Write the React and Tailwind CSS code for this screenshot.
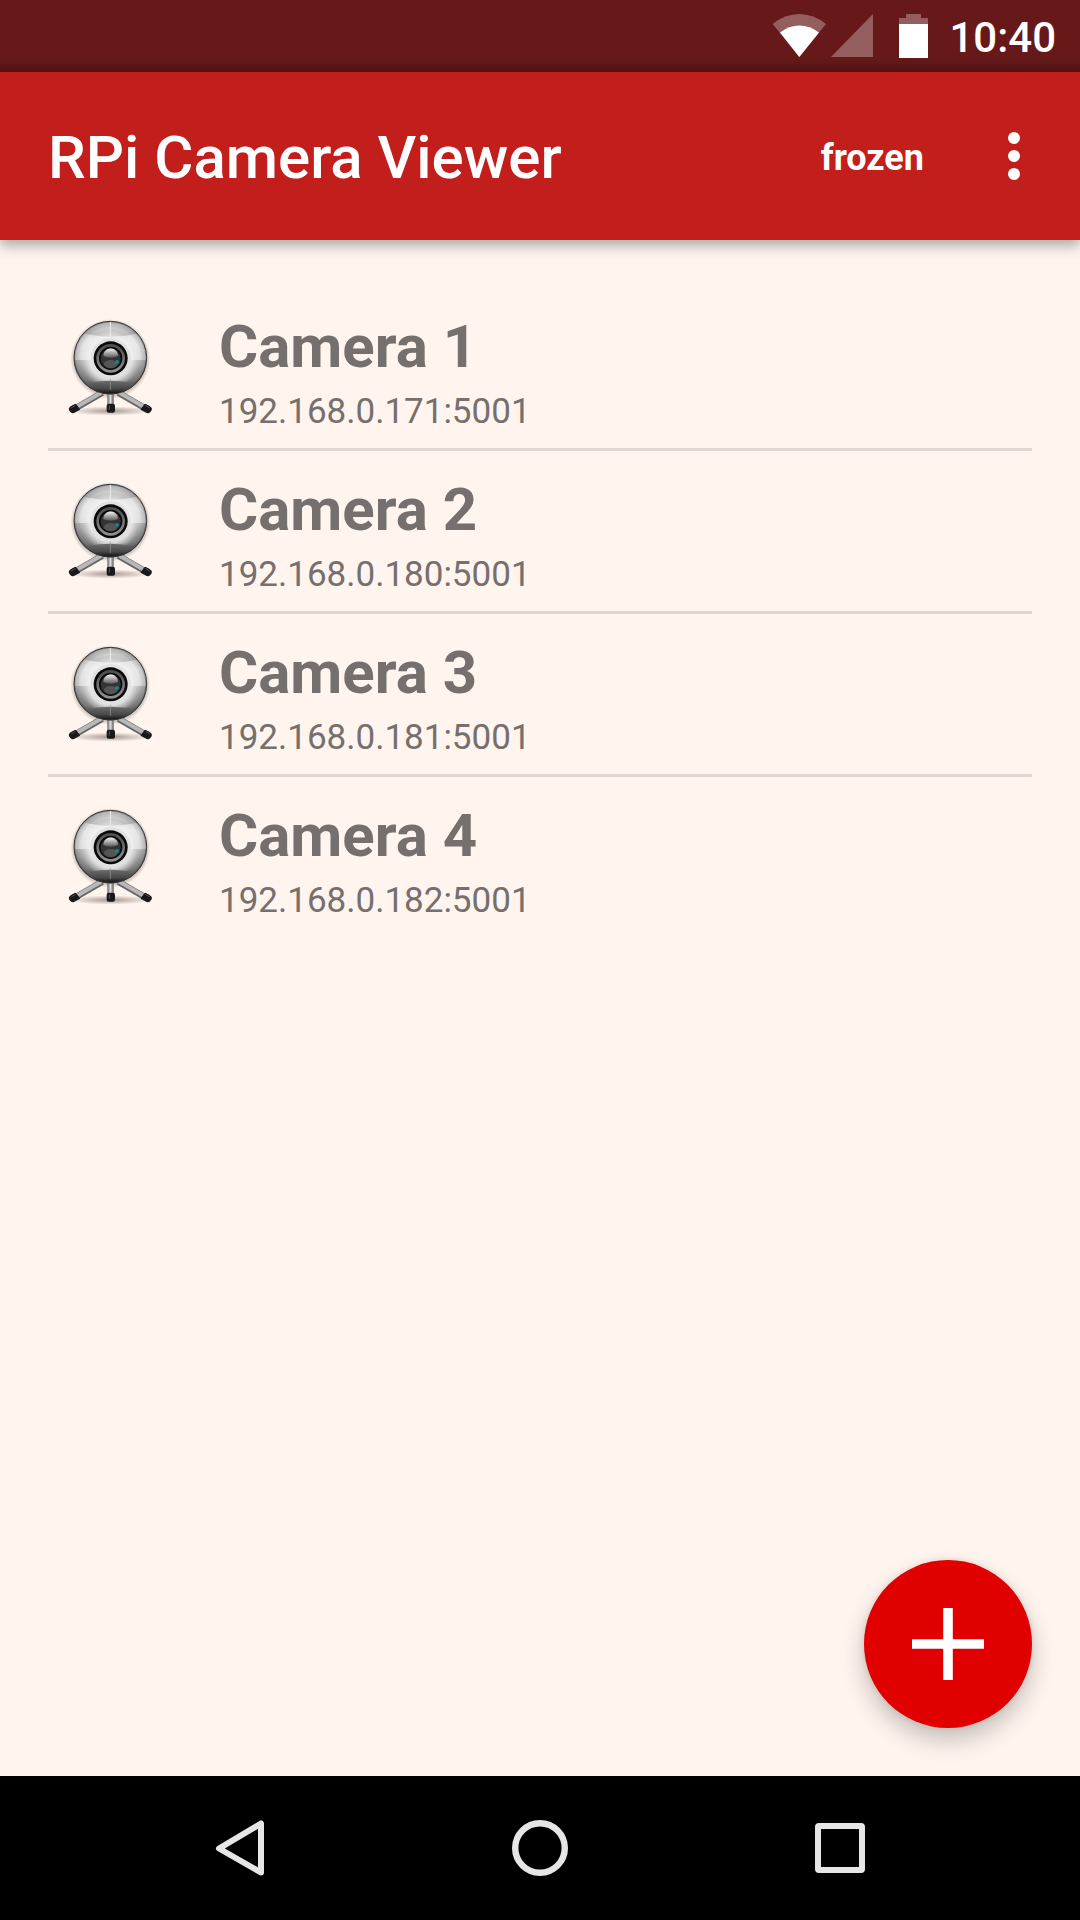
import { useId } from "react";

const cameras = [
  { name: "Camera 1", address: "192.168.0.171:5001" },
  { name: "Camera 2", address: "192.168.0.180:5001" },
  { name: "Camera 3", address: "192.168.0.181:5001" },
  { name: "Camera 4", address: "192.168.0.182:5001" },
];

function WebcamIcon() {
  const id = useId();
  const url = (name) => `url(#${id}${name})`;
  return (
    <svg viewBox="15 24 300 300" className="mt-[6px] size-[100px] shrink-0" aria-hidden="true">
      <defs>
        <linearGradient id={id + "ball"} x1="0" y1="0" x2="0" y2="1">
          <stop offset="0" stopColor="#dadada" />
          <stop offset="0.3" stopColor="#e9e9e9" />
          <stop offset="0.53" stopColor="#dedede" />
          <stop offset="0.531" stopColor="#bdbdbd" />
          <stop offset="0.8" stopColor="#858585" />
          <stop offset="1" stopColor="#222" />
        </linearGradient>
        <radialGradient id={id + "edge"}>
          <stop offset="0.8" stopColor="#000" stopOpacity="0" />
          <stop offset="0.94" stopColor="#222" stopOpacity="0.2" />
          <stop offset="1" stopColor="#111" stopOpacity="0.6" />
        </radialGradient>
        <radialGradient id={id + "glow"}>
          <stop offset="0.6" stopColor="#f8f8f8" />
          <stop offset="0.75" stopColor="#f4f4f4" stopOpacity="0.7" />
          <stop offset="1" stopColor="#f4f4f4" stopOpacity="0" />
        </radialGradient>
        <linearGradient id={id + "top"} x1="0" y1="0" x2="0" y2="1">
          <stop offset="0" stopColor="#ececec" />
          <stop offset="1" stopColor="#b8b8b8" />
        </linearGradient>
        <linearGradient id={id + "base"} x1="0" y1="0" x2="0" y2="1">
          <stop offset="0" stopColor="#6c6c6c" />
          <stop offset="0.5" stopColor="#484848" />
          <stop offset="0.85" stopColor="#0c0c0c" />
        </linearGradient>
        <linearGradient id={id + "ring"} x1="0" y1="0" x2="0" y2="1">
          <stop offset="0" stopColor="#4e4e4e" />
          <stop offset="1" stopColor="#8f8f8f" />
        </linearGradient>
        <linearGradient id={id + "glass"} x1="0" y1="0" x2="0" y2="1">
          <stop offset="0" stopColor="#f4f4f4" />
          <stop offset="1" stopColor="#555" />
        </linearGradient>
        <linearGradient id={id + "leg"} x1="0" y1="0" x2="1" y2="0">
          <stop offset="0" stopColor="#666" />
          <stop offset="0.5" stopColor="#ddd" />
          <stop offset="1" stopColor="#555" />
        </linearGradient>
        <radialGradient id={id + "shade"}>
          <stop offset="0" stopColor="#6b5c55" stopOpacity="0.6" />
          <stop offset="1" stopColor="#6b5c55" stopOpacity="0" />
        </radialGradient>
        <radialGradient id={id + "halo"}>
          <stop offset="0.88" stopColor="#6b5c55" stopOpacity="0.4" />
          <stop offset="1" stopColor="#6b5c55" stopOpacity="0" />
        </radialGradient>
        <clipPath id={id + "clip"}>
          <circle cx="166" cy="143" r="109" />
        </clipPath>
      </defs>
      <ellipse cx="166" cy="303" rx="125" ry="14" fill={url("shade")} />
      <circle cx="166" cy="147" r="120" fill={url("halo")} />
      <path d="M142 248 68 291M190 248 264 291" stroke="#666" strokeWidth="19" />
      <path d="M142 246 68 289M190 246 264 289" stroke="#b8b8b8" strokeWidth="12" />
      <rect x="157" y="245" width="19" height="40" fill={url("leg")} />
      <path
        d="M66 289 51 297M266 289 281 297"
        stroke="#191919"
        strokeWidth="18"
        strokeLinejoin="round"
      />
      <path
        d="M62 284 45 293Q42 296 44 300L49 306Q52 309 56 307L73 298ZM270 284 287 293Q290 296 288 300L283 306Q280 309 276 307L259 298Z"
        fill="#191919"
        stroke="#191919"
        strokeWidth="4"
        strokeLinejoin="round"
      />
      <rect x="155" y="281" width="25" height="27" rx="6" fill="#191919" />
      <path d="M60 287 50 293M272 287 283 293M163 287V298" stroke="#555" strokeWidth="3" strokeLinecap="round" />
      <circle cx="166" cy="143" r="110" fill={url("ball")} />
      <g clipPath={url("clip")}>
        <path d="M50 20H282V60Q228 80 166 80T50 60Z" fill={url("top")} />
        <circle cx="166" cy="143" r="110" fill={url("edge")} />
        <circle cx="166" cy="147" r="86" fill={url("glow")} />
        <path d="M60 230Q106 212 166 212T272 230V260H60Z" fill={url("base")} />
        <path d="M166 34V80" stroke="#eee" strokeWidth="3" />
        <path d="M166 205V240" stroke="#999" strokeWidth="2" />
      </g>
      <circle cx="166" cy="143" r="109" fill="none" stroke="#353535" strokeWidth="3" />
      <circle cx="167" cy="145" r="61" fill="#ddd" fillOpacity="0.8" />
      <circle cx="167" cy="145" r="51" fill="#090909" />
      <circle cx="167" cy="145" r="39" fill="none" stroke={url("ring")} strokeWidth="8" />
      <circle cx="167" cy="146" r="30" fill="#343434" />
      <ellipse cx="167" cy="162" rx="20" ry="12" fill="#555" />
      <path d="M145 138C145 108 189 108 189 138Q167 149 145 138Z" fill={url("glass")} />
      <circle cx="186" cy="156" r="6" fill="#14848c" />
    </svg>
  );
}

function StatusBar() {
  return (
    <header className="flex h-[72px] items-center justify-end bg-gradient-to-b from-[#671919] from-80% to-[#531313] pr-6 text-white">
      <svg viewBox="772 14 54 44" className="h-11 w-[54px]" role="img" aria-label="Wi-Fi">
        <path d="M772.7 24Q785 14 799.3 14T826 24L799.3 57Z" fill="#fff" fillOpacity="0.3" />
        <path d="M780 32.5Q789 25.6 799.3 25.6T819 32.5L799.3 57Z" fill="#fff" />
      </svg>
      <svg viewBox="0 0 43 44" className="ml-[5px] h-11 w-[43px]" role="img" aria-label="No signal">
        <path d="M0 43H42V0Z" fill="#fff" fillOpacity="0.3" />
      </svg>
      <svg viewBox="0 0 29 44" className="ml-[25px] h-11 w-[29px]" role="img" aria-label="Battery">
        <path d="M0 4H7V0H22V4H29V10H0Z" fill="#fff" fillOpacity="0.3" />
        <path d="M0 10H29V44H0Z" fill="#fff" />
      </svg>
      <time className="ml-[21px] pt-1 text-[42px] leading-[50px] font-medium">10:40</time>
    </header>
  );
}

export default function App() {
  return (
    <div className="flex min-h-screen flex-col bg-[#fff4ee] font-['Roboto',sans-serif]">
      <StatusBar />
      <div className="z-10 flex h-[168px] items-center bg-[#c21e1c] pl-12 text-white shadow-[0_6px_12px_rgba(0,0,0,0.3)]">
        <h1 className="flex-1 pt-1 text-[60px] leading-[70px] font-medium">RPi Camera Viewer</h1>
        <button type="button" className="px-6 pt-1 text-[36px] leading-[42px] font-bold">
          frozen
        </button>
        <button type="button" aria-label="More options" className="flex h-[144px] w-[132px] items-center justify-center">
          <svg viewBox="0 0 12 48" className="h-12 w-3" fill="#fff">
            <circle cx="6" cy="6" r="6" />
            <circle cx="6" cy="24" r="6" />
            <circle cx="6" cy="42" r="6" />
          </svg>
        </button>
      </div>
      <main className="relative flex-1 px-12 pt-12 pb-60">
        <ul className="divide-y-[3px] divide-[#e0d6d2] text-[#75706d]">
          {cameras.map((camera) => (
            <li key={camera.name} className="flex items-start gap-[59px] px-3 pt-6 pb-[15px]">
              <WebcamIcon />
              <div className="flex flex-col gap-[9px]">
                <h2 className="text-[60px] leading-[70px] font-bold">{camera.name}</h2>
                <p className="text-[35px] leading-[42px]">{camera.address}</p>
              </div>
            </li>
          ))}
        </ul>
        <button
          type="button"
          aria-label="Add camera"
          className="absolute right-12 bottom-12 flex size-[168px] items-center justify-center rounded-full bg-[#e10000] shadow-[0_12px_24px_rgba(0,0,0,0.22),0_0_6px_rgba(0,0,0,0.1)]"
        >
          <svg viewBox="0 0 72 72" className="size-[72px]" stroke="#fff" strokeWidth="9.6">
            <path d="M36 0V72M0 36H72" />
          </svg>
        </button>
      </main>
      <nav aria-label="System navigation" className="grid h-36 grid-cols-3 bg-black px-[90px]">
        <button type="button" aria-label="Back" className="flex items-center justify-center">
          <svg viewBox="0 0 56 56" className="size-14" fill="none" stroke="#e6e6e6" strokeWidth="6" strokeLinejoin="round">
            <path d="M49 3.5V52.5L7 28.5Z" />
          </svg>
        </button>
        <button type="button" aria-label="Home" className="flex items-center justify-center">
          <svg viewBox="0 0 56 56" className="size-14" fill="none" stroke="#e6e6e6" strokeWidth="6.4">
            <circle cx="28" cy="28" r="24.8" />
          </svg>
        </button>
        <button type="button" aria-label="Recent apps" className="flex items-center justify-center">
          <svg viewBox="0 0 56 56" className="size-14" fill="none" stroke="#e6e6e6" strokeWidth="6" strokeLinejoin="round">
            <rect x="6" y="6" width="44" height="44" rx="1" />
          </svg>
        </button>
      </nav>
    </div>
  );
}
